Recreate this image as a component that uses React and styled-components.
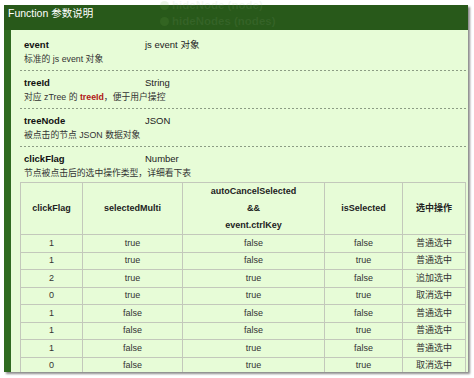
import React from 'react'
import styled, { createGlobalStyle } from 'styled-components';

const GlobalStyle = createGlobalStyle`
  body {
    margin: 0;
    background: #ffffff;
    font-family: "Liberation Sans", Arial, "Noto Sans CJK SC", sans-serif;
  }
`;

const params = [
  { name: 'event', type: 'js event 对象', desc: ['标准的 js event 对象'] },
  { name: 'treeId', type: 'String', desc: ['对应 zTree 的 ', { red: 'treeId' }, '，便于用户操控'] },
  { name: 'treeNode', type: 'JSON', desc: ['被点击的节点 JSON 数据对象'] },
  { name: 'clickFlag', type: 'Number', desc: ['节点被点击后的选中操作类型，详细看下表'] },
];

const rows = [
  ['1', 'true', 'false', 'false', '普通选中'],
  ['1', 'true', 'false', 'true', '普通选中'],
  ['2', 'true', 'true', 'false', '追加选中'],
  ['0', 'true', 'true', 'true', '取消选中'],
  ['1', 'false', 'false', 'false', '普通选中'],
  ['1', 'false', 'false', 'true', '普通选中'],
  ['1', 'false', 'true', 'false', '普通选中'],
  ['0', 'false', 'true', 'true', '取消选中'],
];

const App = () => {
  return (
    <Page>
      <GlobalStyle />
      <Ghost>
        <GhostLine><GhostDot />hideNode (node)</GhostLine>
        <GhostLine><GhostDot />hideNodes (nodes)</GhostLine>
      </Ghost>
      <Panel>
        <PanelHeader>Function 参数说明</PanelHeader>
        <PanelBody>
          {params.map((p, i) => (
            <Item key={p.name} $last={i === params.length - 1}>
              <ItemHead>
                <Name>{p.name}</Name>
                <Type>{p.type}</Type>
              </ItemHead>
              <Desc>
                {p.desc.map((d, j) =>
                  typeof d === 'string' ? d : <Red key={j}>{d.red}</Red>
                )}
              </Desc>
            </Item>
          ))}
          <Table>
            <colgroup>
              <col style={{ width: 62 }} />
              <col style={{ width: 100 }} />
              <col style={{ width: 142 }} />
              <col style={{ width: 78 }} />
              <col style={{ width: 63 }} />
            </colgroup>
            <thead>
              <HeadRow>
                <Th>clickFlag</Th>
                <Th>selectedMulti</Th>
                <Th>autoCancelSelected<br />&amp;&amp;<br />event.ctrlKey</Th>
                <Th>isSelected</Th>
                <Th>选中操作</Th>
              </HeadRow>
            </thead>
            <tbody>
              {rows.map((r, i) => (
                <Row key={i}>
                  {r.map((c, j) => <Td key={j}>{c}</Td>)}
                </Row>
              ))}
            </tbody>
          </Table>
        </PanelBody>
      </Panel>
    </Page>
  )
}

export default App;

export const Page = styled.div`
  position: relative;
  width: 474px;
  height: 378px;
  padding: 5px 0 0 4px;
  box-sizing: border-box;
  overflow: hidden;
`;

// faint text left over from the page behind the panel
export const Ghost = styled.div`
  position: absolute;
  left: 160px;
  top: -3px;
  z-index: 2;
  color: rgba(150, 175, 140, 0.12);
  font-size: 11.5px;
  font-weight: bold;
  line-height: 16px;
  pointer-events: none;
`;

export const GhostLine = styled.div`
  display: flex;
  align-items: center;
  gap: 3px;
`;

export const GhostDot = styled.span`
  width: 9px;
  height: 9px;
  border-radius: 50%;
  background: rgba(110, 170, 80, 0.14);
`;

export const Panel = styled.div`
  width: 464px;
  display: flex;
  flex-direction: column;
  box-shadow: 2px 2px 2px rgba(0, 0, 0, 0.45);
`;

export const PanelHeader = styled.div`
  height: 25px;
  background: #28591a;
  color: #ffffff;
  font-size: 10.5px;
  line-height: 16px;
  padding-left: 4px;
  box-sizing: border-box;
`;

export const PanelBody = styled.div`
  height: 342px;
  box-sizing: border-box;
  overflow: hidden;
  background: #e7fcd7;
  border-left: 7px solid #2f6a20;
  padding: 3px 1px 0 9px;
  display: flex;
  flex-direction: column;
`;

export const Item = styled.div`
  padding: 4px 4px ${p => (p.$last ? '2px' : '5px')};
  background-image: ${p =>
    p.$last ? 'none' : 'repeating-linear-gradient(to right, #8c9c84 0 2px, transparent 2px 4px)'};
  background-size: 100% 1px;
  background-repeat: no-repeat;
  background-position: left bottom;
`;

export const ItemHead = styled.div`
  display: grid;
  grid-template-columns: 121px 1fr;
  font-size: 9.5px;
  line-height: 15px;
  color: #111;
`;

export const Name = styled.span`
  font-weight: bold;
`;

export const Type = styled.span`
  color: #222;
`;

export const Desc = styled.div`
  font-size: 8.8px;
  line-height: 14px;
  color: #333;
`;

export const Red = styled.b`
  color: #b01818;
`;

export const Table = styled.table`
  width: 445px;
  table-layout: fixed;
  border-collapse: collapse;
  font-size: 9px;
  color: #333;
  flex-shrink: 0;
`;

export const HeadRow = styled.tr`
  height: 51px;
`;

export const Th = styled.th`
  border: 1px solid #c3c8bb;
  font-weight: bold;
  color: #222;
  line-height: 17px;
  padding: 0;
  text-align: center;
  vertical-align: middle;
`;

export const Row = styled.tr`
  height: 17.5px;
`;

export const Td = styled.td`
  border: 1px solid #c3c8bb;
  padding: 0;
  text-align: center;
  line-height: 15px;
`;
